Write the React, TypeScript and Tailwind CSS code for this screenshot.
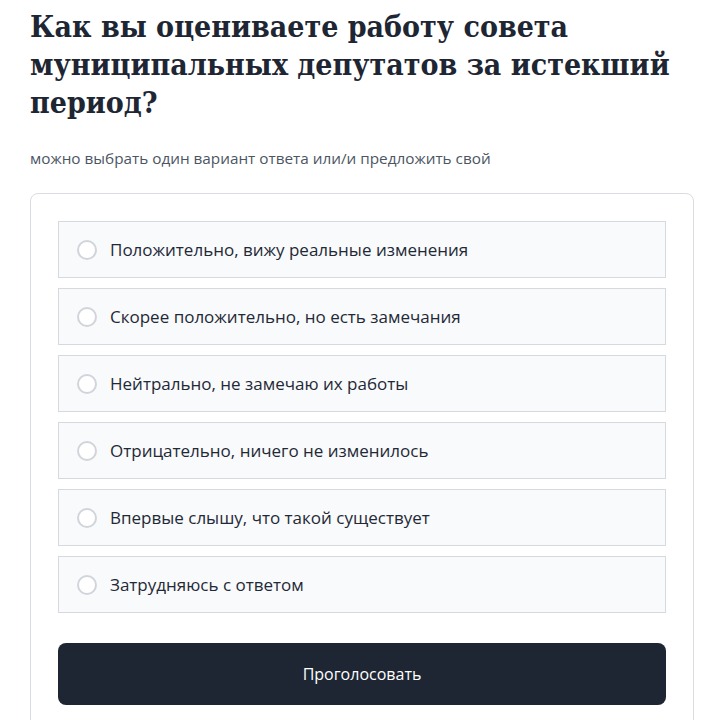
const OPTIONS = [
  "Положительно, вижу реальные изменения",
  "Скорее положительно, но есть замечания",
  "Нейтрально, не замечаю их работы",
  "Отрицательно, ничего не изменилось",
  "Впервые слышу, что такой существует",
  "Затрудняюсь с ответом",
];

export default function App() {
  return (
    <div className="min-h-[720px] bg-white px-[30px] pt-[8px] font-['Open_Sans',sans-serif]">
      <h1 className="font-['DejaVu_Serif_Condensed','DejaVu_Serif',serif] text-[30px] font-bold leading-[38px] text-[#1e2633]">
        Как вы оцениваете работу совета муниципальных депутатов за истекший период?
      </h1>
      <p className="mt-[26px] text-[15.3px] leading-5 text-[#4b5563]">
        можно выбрать один вариант ответа или/и предложить свой
      </p>
      <div className="mt-[25px] w-[664px] rounded-lg border border-[#d9dce1] px-[27px] pt-[27px] pb-[27px]">
        <div className="flex flex-col gap-[10px]">
          {OPTIONS.map((o) => (
            <label
              key={o}
              className="flex h-[57px] items-center gap-[13px] border border-[#d6d9de] bg-[#f9fafb] px-[18px]"
            >
              <span className="h-[20px] w-[20px] rounded-full border-2 border-[#d1d5db] bg-white" />
              <span className="text-[17px] text-[#1f2937]">{o}</span>
            </label>
          ))}
        </div>
        <button className="mt-[30px] h-[62px] w-full rounded-lg bg-[#1e2633] text-[16px] text-white">
          Проголосовать
        </button>
      </div>
    </div>
  );
}
